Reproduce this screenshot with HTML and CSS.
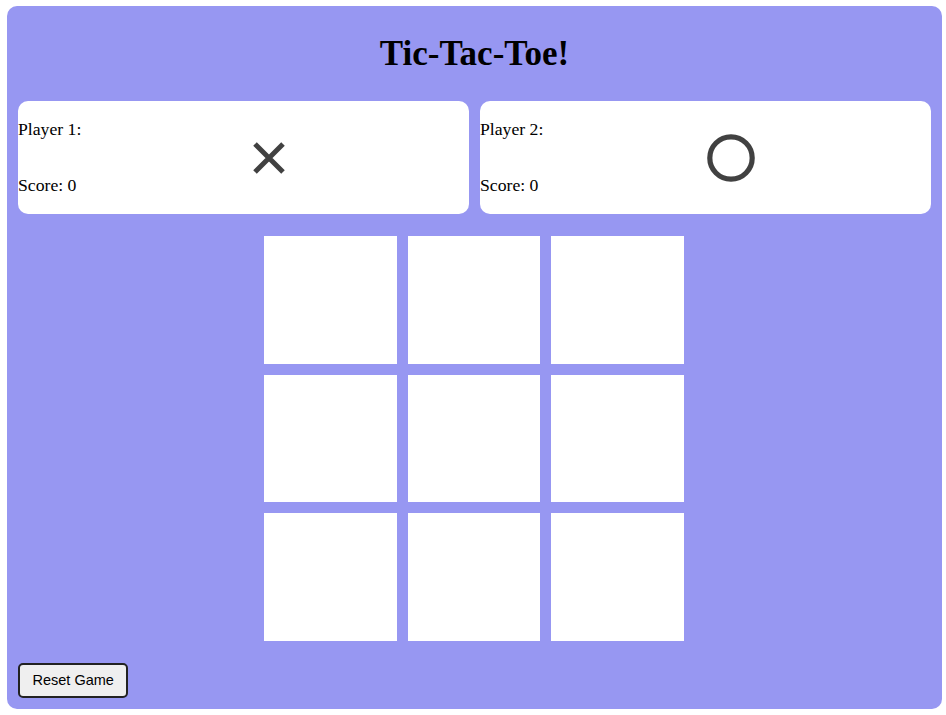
FILE: index.html
```html
<!DOCTYPE html>
<html lang="en">
<head>
<meta charset="utf-8">
<title>Tic-Tac-Toe!</title>
<link rel="stylesheet" href="styles.css">
</head>
<body>
<main class="game">
  <h1 class="title">Tic-Tac-Toe!</h1>
  <section class="players">
    <div class="player">
      <div class="player-info">
        <span>Player 1:</span>
        <span>Score: 0</span>
      </div>
      <div class="player-mark">
        <svg class="mark" width="34" height="34" viewBox="0 0 34 34" aria-label="X">
          <path d="M3 3 L31 31 M31 3 L3 31" stroke="#414141" stroke-width="5" stroke-linecap="butt" fill="none"/>
        </svg>
      </div>
    </div>
    <div class="player">
      <div class="player-info">
        <span>Player 2:</span>
        <span>Score: 0</span>
      </div>
      <div class="player-mark">
        <svg class="mark" width="48" height="48" viewBox="0 0 48 48" aria-label="O">
          <circle cx="24" cy="24" r="21.2" stroke="#414141" stroke-width="5.2" fill="none"/>
        </svg>
      </div>
    </div>
  </section>
  <section class="board">
    <div class="cell"></div>
    <div class="cell"></div>
    <div class="cell"></div>
    <div class="cell"></div>
    <div class="cell"></div>
    <div class="cell"></div>
    <div class="cell"></div>
    <div class="cell"></div>
    <div class="cell"></div>
  </section>
  <div class="controls">
    <button class="reset" type="button">Reset Game</button>
  </div>
</main>
</body>
</html>
```

FILE: styles.css
```css
html, body {
  background: #ffffff;
}

body {
  margin: 6px 4px 6px 7px;
  font-family: "Liberation Serif", "Times New Roman", serif;
  font-size: 16px;
  color: #000;
}

.game {
  background: #9797f2;
  border-radius: 10px;
  padding: 0 11px 11px 11px;
  display: flex;
  flex-direction: column;
}

.title {
  margin: 0;
  height: 95px;
  display: flex;
  align-items: center;
  justify-content: center;
  font-size: 35px;
  font-weight: bold;
  line-height: 1;
  box-sizing: border-box;
}

.players {
  display: flex;
  gap: 11px;
}

.player {
  flex: 1;
  height: 113px;
  box-sizing: border-box;
  background: #ffffff;
  border-radius: 10px;
  padding: 18px 0 18px 0;
  display: flex;
  font-size: 17.7px;
}

.player-info {
  display: flex;
  flex-direction: column;
  justify-content: space-between;
  white-space: nowrap;
}

.player-mark {
  flex: 1;
  display: flex;
  align-items: center;
  justify-content: center;
  padding-right: 12px;
}

.mark {
  display: block;
}

.board {
  align-self: center;
  margin: 22px 1px 22px 0;
  width: 420px;
  display: grid;
  grid-template-columns: repeat(3, 1fr);
  grid-template-rows: repeat(3, 127.67px);
  gap: 11px;
}

.cell {
  background: #ffffff;
}

.controls {
  display: flex;
}

.reset {
  font-family: "Liberation Sans", Arial, sans-serif;
  font-size: 14.5px;
  height: 35px;
  padding: 0 12.5px;
  background: #efefef;
  color: #000;
  border: 2px solid #222222;
  border-radius: 5px;
}
```
